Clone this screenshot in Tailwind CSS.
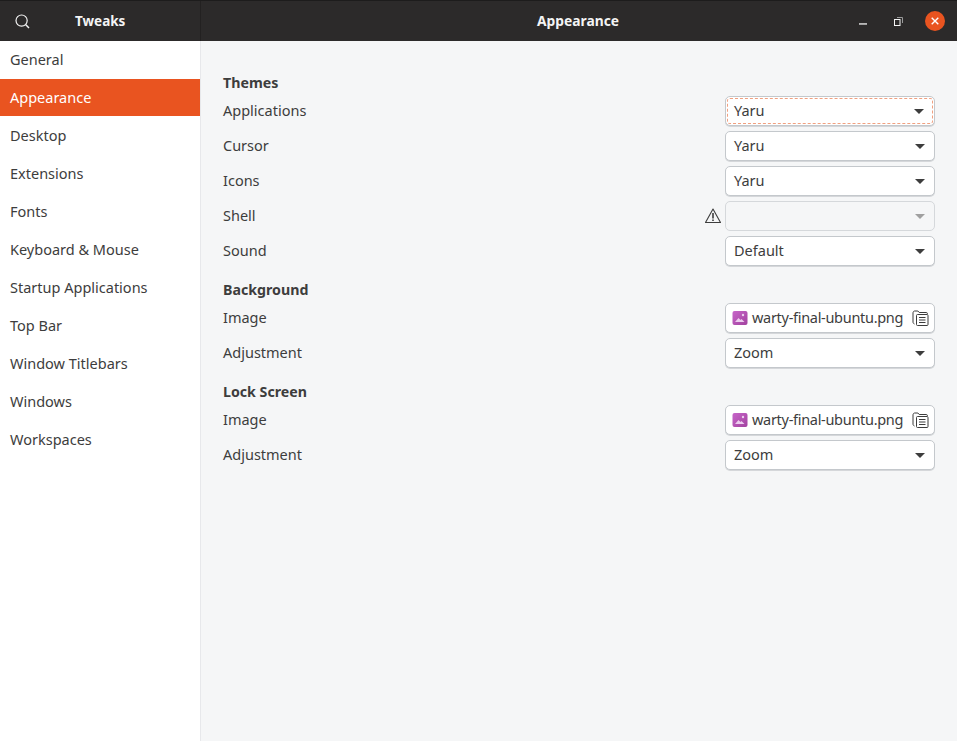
<!DOCTYPE html>
<html lang="en">
<head>
    <meta charset="UTF-8">
    <title>Tweaks</title>
    <script src="https://cdn.jsdelivr.net/npm/@tailwindcss/browser@4"></script>
</head>
<body class="w-[957px] h-[741px] overflow-hidden bg-[#f5f6f7] font-['Noto_Sans',sans-serif] text-[14.5px] text-[#3d3d3d] flex flex-col">
    <!-- title bar -->
    <header class="h-[41px] bg-[#2c2a2a] border-t border-[#1d1c1c] flex shrink-0 text-white">
        <div class="w-[201px] border-r border-[#232121] flex items-center relative">
            <svg class="ml-[15px]" width="15" height="15" viewBox="0 0 15 15" fill="none" stroke="#f2f2f2" stroke-width="1.2">
                <circle cx="6.6" cy="6.6" r="5.6"/>
                <path d="M10.8 10.8l3.2 3.2" stroke-width="1.5"/>
            </svg>
            <span class="ml-[45px] font-bold text-[13.5px] text-[#f4f4f4]">Tweaks</span>
        </div>
        <div class="flex-1 flex items-center justify-center font-bold text-[13.8px] text-[#f4f4f4] pr-[2px]">Appearance</div>
        <div class="absolute right-[12px] top-[11px] flex items-center">
            <svg width="8" height="2" class="mr-[27px] mt-[6px]"><rect width="8" height="1.3" y="0.3" fill="#f2f2f2"/></svg>
            <svg width="9" height="9" viewBox="0 0 9 9" class="mr-[22px] mt-[1px]" fill="none">
                <path d="M3 .5h5.5V6" stroke="#9a9a9a"/>
                <rect x="0.5" y="2.5" width="5.5" height="6" stroke="#f5f5f5"/>
            </svg>
            <div class="w-[20px] h-[20px] rounded-full bg-[#e95420] flex items-center justify-center">
                <svg width="8" height="8" viewBox="0 0 8 8"><path d="M.7.7l6.6 6.6M7.3.7L.7 7.3" stroke="#fff" stroke-width="1.4"/></svg>
            </div>
        </div>
    </header>

    <div class="flex-1 flex">
        <!-- sidebar -->
        <nav class="w-[201px] bg-white border-r border-[#e7e8eb] shrink-0">
            <div class="h-[38px] pl-[10px] flex items-center">General</div>
            <div class="h-[37px] pl-[10px] flex items-center bg-[#e95420] text-white">Appearance</div>
            <div class="h-[39px] pl-[10px] flex items-center">Desktop</div>
            <div class="h-[38px] pl-[10px] flex items-center">Extensions</div>
            <div class="h-[38px] pl-[10px] flex items-center">Fonts</div>
            <div class="h-[38px] pl-[10px] flex items-center">Keyboard &amp; Mouse</div>
            <div class="h-[38px] pl-[10px] flex items-center">Startup Applications</div>
            <div class="h-[38px] pl-[10px] flex items-center">Top Bar</div>
            <div class="h-[38px] pl-[10px] flex items-center">Window Titlebars</div>
            <div class="h-[38px] pl-[10px] flex items-center">Windows</div>
            <div class="h-[38px] pl-[10px] flex items-center">Workspaces</div>
        </nav>

        <!-- settings -->
        <main class="flex-1 pt-[32px] pl-[22px] pr-[22px] flex flex-col">
            <svg width="0" height="0" class="absolute">
                <defs>
                    <linearGradient id="imgfill" x1="0" y1="0" x2="1" y2="1">
                        <stop offset="0" stop-color="#c765c9"/>
                        <stop offset="1" stop-color="#a2429f"/>
                    </linearGradient>
                </defs>
            </svg>
            <h2 class="h-[20px] mb-[3px] flex items-center font-bold text-[14.2px]">Themes</h2>
            <div class="flex flex-col gap-[5px]">
                <div class="h-[30px] flex items-center justify-between">
                    <span>Applications</span>
                    <div class="w-[210px] h-[30px] rounded-[5px] border border-[#c4c8cc] shadow-[0_1px_0_#d5d7da] bg-white p-[1px]">
                        <div class="h-full rounded-[3px] border border-dashed border-[#f0a080] pl-[6px] pr-[8px] flex items-center justify-between">
                            <span>Yaru</span>
                            <span class="w-0 h-0 border-x-[5px] border-x-transparent border-t-[5px] border-t-[#3d3d3d]"></span>
                        </div>
                    </div>
                </div>
                <div class="h-[30px] flex items-center justify-between">
                    <span>Cursor</span>
                    <div class="w-[210px] h-[30px] rounded-[5px] border border-[#c4c8cc] shadow-[0_1px_0_#d5d7da] bg-white pl-[8px] pr-[9px] flex items-center justify-between">
                        <span>Yaru</span>
                        <span class="w-0 h-0 border-x-[5px] border-x-transparent border-t-[5px] border-t-[#3d3d3d]"></span>
                    </div>
                </div>
                <div class="h-[30px] flex items-center justify-between">
                    <span>Icons</span>
                    <div class="w-[210px] h-[30px] rounded-[5px] border border-[#c4c8cc] shadow-[0_1px_0_#d5d7da] bg-white pl-[8px] pr-[9px] flex items-center justify-between">
                        <span>Yaru</span>
                        <span class="w-0 h-0 border-x-[5px] border-x-transparent border-t-[5px] border-t-[#3d3d3d]"></span>
                    </div>
                </div>
                <div class="h-[30px] flex items-center">
                    <span>Shell</span>
                    <svg class="ml-auto mr-[4px]" width="16" height="16" viewBox="0 0 16 16" fill="none">
                        <path d="M8 1L15.5 14.5H.5z" stroke="#3d3d3d" stroke-width="1.1" stroke-linejoin="round"/>
                        <path d="M8 5v5.5" stroke="#3d3d3d" stroke-width="1.6"/>
                        <path d="M8 11.5v1.6" stroke="#3d3d3d" stroke-width="1.6"/>
                    </svg>
                    <div class="w-[210px] h-[30px] rounded-[5px] border border-[#d5d8db] bg-[#f5f6f7] pl-[9px] pr-[9px] flex items-center justify-end">
                        <span class="w-0 h-0 border-x-[5px] border-x-transparent border-t-[5px] border-t-[#a0a0a0]"></span>
                    </div>
                </div>
                <div class="h-[30px] flex items-center justify-between">
                    <span>Sound</span>
                    <div class="w-[210px] h-[30px] rounded-[5px] border border-[#c4c8cc] shadow-[0_1px_0_#d5d7da] bg-white pl-[8px] pr-[9px] flex items-center justify-between">
                        <span>Default</span>
                        <span class="w-0 h-0 border-x-[5px] border-x-transparent border-t-[5px] border-t-[#3d3d3d]"></span>
                    </div>
                </div>
            </div>

            <h2 class="h-[20px] mt-[14px] mb-[3px] flex items-center font-bold text-[14.2px]">Background</h2>
            <div class="flex flex-col gap-[5px]">
                <div class="h-[30px] flex items-center justify-between">
                    <span>Image</span>
                    <div class="w-[210px] h-[30px] rounded-[5px] border border-[#c4c8cc] shadow-[0_1px_0_#d5d7da] bg-white pl-[6px] pr-[5px] flex items-center">
                        <svg width="16" height="16" viewBox="0 0 16 16">
                            <rect x="0.5" y="1" width="15" height="14" rx="2" fill="url(#imgfill)"/>
                            <path d="M3 12l3.5-4 2 2 1-1 3 3z" fill="#eccdee"/>
                            <circle cx="11" cy="5" r="1.2" fill="#eccdee"/>
                        </svg>
                        <span class="ml-[4px] flex-1 tracking-[-0.3px]">warty-final-ubuntu.png</span>
                        <svg width="17" height="16" viewBox="0 0 17 16" fill="none" stroke="#3d3d3d">
                            <path d="M2.5 14c-1-.3-1.5-1-1.5-2V3c0-1 .6-2 1.6-2h3.3l1.3 1.5h7c.8 0 1.3.5 1.3 1.3"/>
                            <rect x="4.5" y="4.5" width="11.5" height="11" rx="1"/>
                            <path d="M7 7.5h6.5M7 10h6.5M7 12.5h6.5"/>
                        </svg>
                    </div>
                </div>
                <div class="h-[30px] flex items-center justify-between">
                    <span>Adjustment</span>
                    <div class="w-[210px] h-[30px] rounded-[5px] border border-[#c4c8cc] shadow-[0_1px_0_#d5d7da] bg-white pl-[8px] pr-[9px] flex items-center justify-between">
                        <span>Zoom</span>
                        <span class="w-0 h-0 border-x-[5px] border-x-transparent border-t-[5px] border-t-[#3d3d3d]"></span>
                    </div>
                </div>
            </div>

            <h2 class="h-[20px] mt-[14px] mb-[3px] flex items-center font-bold text-[14.2px]">Lock Screen</h2>
            <div class="flex flex-col gap-[5px]">
                <div class="h-[30px] flex items-center justify-between">
                    <span>Image</span>
                    <div class="w-[210px] h-[30px] rounded-[5px] border border-[#c4c8cc] shadow-[0_1px_0_#d5d7da] bg-white pl-[6px] pr-[5px] flex items-center">
                        <svg width="16" height="16" viewBox="0 0 16 16">
                            <rect x="0.5" y="1" width="15" height="14" rx="2" fill="url(#imgfill)"/>
                            <path d="M3 12l3.5-4 2 2 1-1 3 3z" fill="#eccdee"/>
                            <circle cx="11" cy="5" r="1.2" fill="#eccdee"/>
                        </svg>
                        <span class="ml-[4px] flex-1 tracking-[-0.3px]">warty-final-ubuntu.png</span>
                        <svg width="17" height="16" viewBox="0 0 17 16" fill="none" stroke="#3d3d3d">
                            <path d="M2.5 14c-1-.3-1.5-1-1.5-2V3c0-1 .6-2 1.6-2h3.3l1.3 1.5h7c.8 0 1.3.5 1.3 1.3"/>
                            <rect x="4.5" y="4.5" width="11.5" height="11" rx="1"/>
                            <path d="M7 7.5h6.5M7 10h6.5M7 12.5h6.5"/>
                        </svg>
                    </div>
                </div>
                <div class="h-[30px] flex items-center justify-between">
                    <span>Adjustment</span>
                    <div class="w-[210px] h-[30px] rounded-[5px] border border-[#c4c8cc] shadow-[0_1px_0_#d5d7da] bg-white pl-[8px] pr-[9px] flex items-center justify-between">
                        <span>Zoom</span>
                        <span class="w-0 h-0 border-x-[5px] border-x-transparent border-t-[5px] border-t-[#3d3d3d]"></span>
                    </div>
                </div>
            </div>
        </main>
    </div>
</body>
</html>
